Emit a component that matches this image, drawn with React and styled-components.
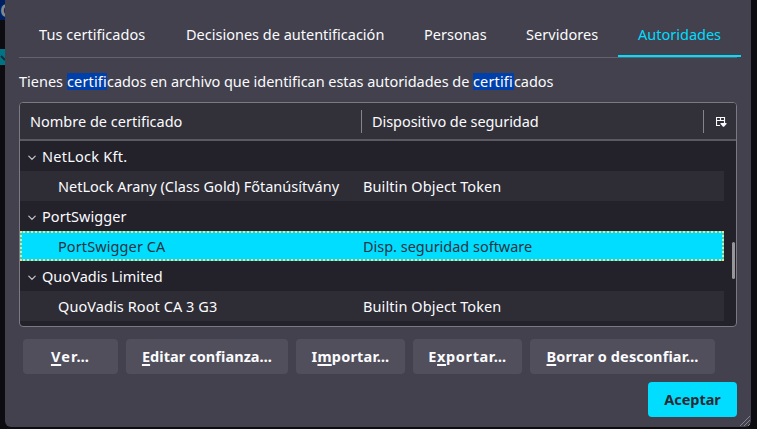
import React from 'react';
import styled, { createGlobalStyle } from 'styled-components';

const Global = createGlobalStyle`
  * { box-sizing: border-box; }
  body {
    margin: 0;
    overflow: hidden;
    background: #0d0d11;
    color: #fbfbfe;
    font: 14.5px/20px "Noto Sans", "Open Sans", sans-serif;
  }
`;

const Window = styled.div`
  display: flex;
  width: 757px;
  height: 429px;
`;
const Behind = styled.div`
  width: 5px;
  height: 100%;
  overflow: hidden;
  flex: none;
`;
const BehindHeader = styled.div`
  height: 20px;
  overflow: hidden;
  background: #002062;
  color: #85878f;
  font-size: 18px;
  font-weight: 700;
  line-height: 20px;
`;
const BehindCheck = styled.div`
  height: 16px;
  margin-top: 29px;
  background: #007384;
  svg { display: block; }
`;
const Dialog = styled.main`
  position: relative;
  width: 746px;
  height: 427px;
  padding: 13px 10px 0 14px;
  border-radius: 0 0 6px 6px;
  background: #42414d;
`;
const Tabs = styled.nav`
  display: flex;
  width: 718px;
  height: 45px;
  border-bottom: 1px solid #64636d;
`;
const Tab = styled.div`
  flex: none;
  width: ${p => p.$w}px;
  height: ${p => (p.$active ? 44 : 43)}px;
  padding: 11px 0 0 20px;
  white-space: nowrap;
  letter-spacing: ${p => p.$track || 0}px;
  color: ${p => (p.$active ? '#00ddff' : 'inherit')};
  border-bottom: ${p => (p.$active ? '2px solid #00ddff' : '0')};
`;
const Description = styled.p`
  display: flex;
  margin: 15px 0 0;
  height: 17px;
  line-height: 17px;
  white-space: pre;
`;
const Piece = styled.span`
  flex: none;
  width: ${p => p.$w}px;
  letter-spacing: ${p => p.$track || 0}px;
  background: ${p => (p.$hit ? '#0040ab' : 'transparent')};
`;
const Tree = styled.section`
  display: flex;
  flex-direction: column;
  width: 718px;
  height: 225px;
  margin-top: 12px;
  overflow: hidden;
  border: 1px solid #7b7a81;
  border-radius: 4px;
  background: #23222b;
`;
const Header = styled.div`
  display: flex;
  align-items: center;
  flex: none;
  height: 38px;
  background: #32313a;
  border-bottom: 2px solid #5b5a61;
`;
const Column = styled.div`
  flex: none;
  display: flex;
  align-items: center;
  width: ${p => p.$w}px;
  height: 23px;
  padding-left: 10px;
  letter-spacing: ${p => p.$track}px;
  border-right: 1px solid #85848a;
`;
const Picker = styled.div`
  display: flex;
  padding: 2px 0 0 12px;
`;
const Body = styled.div`
  display: flex;
  flex: 1;
`;
const Rows = styled.div`
  width: 704px;
`;
const Row = styled.div`
  display: flex;
  align-items: center;
  height: 30px;
  padding-left: ${p => (p.$child ? 38 : 8)}px;
  background: ${p => (p.$child ? '#2e2d36' : 'transparent')};
`;
const SelectedRow = styled(Row)`
  padding-left: 36px;
  color: #24343f;
  background: #00ddff;
  border: 2px dotted #ffdc74;
`;
const Name = styled.span`
  width: 305px;
  letter-spacing: ${p => p.$track || 0}px;
  white-space: nowrap;
`;
const Device = styled.span`
  letter-spacing: ${p => p.$track || 0}px;
`;
const Twisty = styled.svg`
  margin: 3px 6px 0 0;
  flex: none;
`;
const Scroll = styled.div`
  width: 3px;
  height: 37px;
  margin: 101px 0 0 8px;
  border-radius: 2px;
  background: #96959a;
`;
const Actions = styled.div`
  display: flex;
  gap: 8px;
  margin: 12px 0 0 4px;
`;
const Button = styled.button`
  width: ${p => p.$w}px;
  height: 35px;
  padding: 0 0 2px;
  border: 0;
  border-radius: 4px;
  color: ${p => (p.$primary ? '#2b2a33' : '#fbfbfe')};
  background: ${p => (p.$primary ? '#00ddff' : '#504f5b')};
  font: 700 14.5px/20px "Noto Sans", sans-serif;
  letter-spacing: ${p => p.$track || 0}px;
  white-space: nowrap;
  u {
    text-decoration-thickness: 2px;
    text-underline-offset: 2px;
    text-decoration-skip-ink: none;
  }
`;
const Footer = styled.footer`
  display: flex;
  justify-content: flex-end;
  margin: 8px 4px 0 0;
`;
const Grip = styled.svg`
  position: absolute;
  right: 1px;
  bottom: 1px;
`;

const groups = [
  { name: 'NetLock Kft.', track: 0.26, child: 'NetLock Arany (Class Gold) Főtanúsítvány', childTrack: 0, device: 'Builtin Object Token', deviceTrack: 0.1 },
  { name: 'PortSwigger', track: 0.05, child: 'PortSwigger CA', childTrack: 0.1, device: 'Disp. seguridad software', deviceTrack: -0.02, selected: true },
  { name: 'QuoVadis Limited', track: 0.04, child: 'QuoVadis Root CA 3 G3', childTrack: 0.08, device: 'Builtin Object Token', deviceTrack: 0.1 },
];

function Group({ name, track, child, childTrack, device, deviceTrack, selected }) {
  const Entry = selected ? SelectedRow : Row;
  return (
    <>
      <Row>
        <Twisty width="8" height="6" viewBox="0 0 8 6" fill="none" stroke="#c4c4c9" strokeWidth="1.2" strokeLinecap="round">
          <path d="M.8 1.2 4 4.5 7.2 1.2" />
        </Twisty>
        <Name $track={track}>{name}</Name>
      </Row>
      <Entry $child>
        <Name $track={childTrack}>{child}</Name>
        <Device $track={deviceTrack}>{device}</Device>
      </Entry>
    </>
  );
}

export default function App() {
  return (
    <Window>
      <Global />
      <Behind>
        <BehindHeader>C</BehindHeader>
        <BehindCheck>
          <svg width="5" height="16" fill="none" stroke="#102c34" strokeWidth="2"><path d="M1 7 5 11" /></svg>
        </BehindCheck>
      </Behind>
      <Dialog>
        <Tabs>
          <Tab $w={147} $track={0.04}>Tus certificados</Tab>
          <Tab $w={238}>Decisiones de autentificación</Tab>
          <Tab $w={102}>Personas</Tab>
          <Tab $w={112} $track={0.05}>Servidores</Tab>
          <Tab $w={123} $active>Autoridades</Tab>
        </Tabs>
        <Description>
          <Piece $w={48}>{'Tienes '}</Piece>
          <Piece $w={40} $track={0.15} $hit>certifi</Piece>
          <Piece $w={366} $track={-0.05}>{'cados en archivo que identifican estas autoridades de '}</Piece>
          <Piece $w={41} $track={0.15} $hit>certifi</Piece>
          <Piece $w={40} $track={-0.1}>cados</Piece>
        </Description>
        <Tree>
          <Header>
            <Column $w={342} $track={0}>Nombre de certificado</Column>
            <Column $w={342} $track={-0.06}>Dispositivo de seguridad</Column>
            <Picker>
              <svg width="11" height="10" viewBox="0 0 11 10">
                <path d="M4 8.5H.5v-8h8V6M.5 3.5h8M4.5.5v3" fill="none" stroke="#fbfbfe" strokeWidth="1.15" />
                <path d="M4.5 6h6v1l-2.5 2.7h-1L4.5 7z" fill="#fbfbfe" />
              </svg>
            </Picker>
          </Header>
          <Body>
            <Rows>{groups.map(g => <Group key={g.name} {...g} />)}</Rows>
            <Scroll />
          </Body>
        </Tree>
        <Actions>
          <Button $w={95} $track={1.2}><u>V</u>er…</Button>
          <Button $w={162} $track={0.06}><u>E</u>ditar confianza…</Button>
          <Button $w={109} $track={0.2}>I<u>m</u>portar…</Button>
          <Button $w={109} $track={0.62}>E<u>x</u>portar…</Button>
          <Button $w={185} $track={0.13}><u>B</u>orrar o desconfiar…</Button>
        </Actions>
        <Footer><Button $w={89} $track={-0.05} $primary>Aceptar</Button></Footer>
        <Grip width="10" height="10" stroke="#85848d" strokeWidth="1">
          <path d="M0 10 10 0M4 10l6-6M8 10l2-2" />
        </Grip>
      </Dialog>
    </Window>
  );
}
